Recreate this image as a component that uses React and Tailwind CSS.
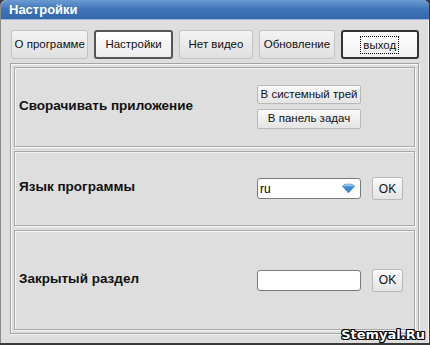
import React from "react";

const tabs = [
    { title: "О программе", w: "w-[78px]" },
    { title: "Настройки", w: "w-[79px]", active: true },
    { title: "Нет видео", w: "w-[75px]" },
    { title: "Обновление", w: "w-[76px]" },
    { title: "выход", w: "w-[79px]", exit: true },
];

function Btn({ children, className = "" }) {
    return (
        <div
            className={`flex items-center justify-center whitespace-nowrap rounded-[2px] border border-[#b8b8b8] bg-gradient-to-b from-[#fafafa] to-[#e4e4e4] text-[11.5px] text-[#111] ${className}`}
        >
            {children}
        </div>
    );
}

function Section({ label, children, className = "" }) {
    return (
        <div className={`flex items-center border border-[#a8a8a8] shadow-[inset_1px_1px_0_#f4f4f4,1px_1px_0_#f8f8f8] ${className}`}>
            <div className="w-[242px] pl-[4px] pb-[2px] text-[13.5px] font-bold text-[#111]">{label}</div>
            {children}
        </div>
    );
}

export default function App() {
    return (
        <div
            className="relative w-[430px] h-[345px] bg-[#3a3a3a] overflow-hidden"
            style={{ fontFamily: '"Liberation Sans", Arial, sans-serif' }}
        >
            <div className="flex h-[343px] w-[429px] flex-col rounded-t-[6px] bg-[#dedede] border-l border-[#8a8a8a]">
                {/* Заголовок */}
                <div className="flex h-[20px] items-center rounded-t-[6px] bg-gradient-to-b from-[#6c9bd2] via-[#3f74b8] to-[#3468ad] pl-[8px] text-[13px] font-bold text-white border-b border-[#9fb7d6]">
                    Настройки
                </div>

                <div className="flex flex-1 flex-col pl-[9px] pr-[9px] pt-[10px] pb-[9px] border-r border-[#f4f4f4]">
                    {/* Вкладки */}
                    <div className="flex gap-[6px] pl-[1px]">
                        {tabs.map((t) => (
                            <div
                                key={t.title}
                                className={`flex h-[29px] items-center justify-center whitespace-nowrap rounded-[3px] text-[11.5px] text-[#111] ${t.w} ${
                                    t.active
                                        ? "border-2 border-[#555] bg-gradient-to-b from-white to-[#ececec]"
                                        : t.exit
                                        ? "border-2 border-[#333] bg-gradient-to-b from-white to-[#f0f0f0]"
                                        : "border border-[#c2c2c2] bg-gradient-to-b from-[#f4f4f4] to-[#e0e0e0]"
                                }`}
                            >
                                <span className={t.exit ? "border border-dotted border-black px-[2px] leading-[16px]" : ""}>{t.title}</span>
                            </div>
                        ))}
                    </div>

                    {/* Рамка */}
                    <div className="mt-[4px] flex flex-1 flex-col gap-[4px] border border-[#a4a4a4] p-[3px] shadow-[inset_1px_1px_0_#f6f6f6,1px_1px_0_#f6f6f6]">
                        <Section label="Сворачивать приложение" className="h-[80px]">
                            <div className="flex flex-col gap-[5px]">
                                <Btn className="h-[19px] w-[104px]">В системный трей</Btn>
                                <Btn className="h-[20px] w-[104px]">В панель задач</Btn>
                            </div>
                        </Section>
                        <Section label="Язык программы" className="h-[75px]">
                            <div className="flex items-center gap-[11px]">
                                <div className="flex h-[21px] w-[104px] items-center justify-between rounded-[3px] border border-[#7a7a7a] bg-white pl-[2px] pr-[4px] text-[12px]">
                                    <span>ru</span>
                                    <svg width="15" height="11" viewBox="0 0 14 10">
                                        <path d="M1 3 L4 0.5 H10 L13 3 L7 9.5 Z" fill="#3d88d6" />
                                        <path d="M4 1 H10 L12 3 H2 Z" fill="#9cc8f0" />
                                    </svg>
                                </div>
                                <Btn className="h-[23px] w-[31px] text-[12px]">OK</Btn>
                            </div>
                        </Section>
                        <Section label="Закрытый раздел" className="flex-1">
                            <div className="flex items-center gap-[11px]">
                                <div className="h-[21px] w-[104px] rounded-[3px] border border-[#7a7a7a] bg-white" />
                                <Btn className="h-[23px] w-[31px] text-[12px]">OK</Btn>
                            </div>
                        </Section>
                    </div>
                </div>
            </div>
            <div
                className="absolute right-[5px] top-[325px] text-[13px] font-bold text-white"
                style={{ fontFamily: '"DejaVu Sans", sans-serif', textShadow: "1px 0 #000,-1px 0 #000,0 1px #000,0 -1px #000,1px 1px #000,-1px -1px #000,1px -1px #000,-1px 1px #000" }}
            >
                Stemyal.Ru
            </div>
        </div>
    );
}
